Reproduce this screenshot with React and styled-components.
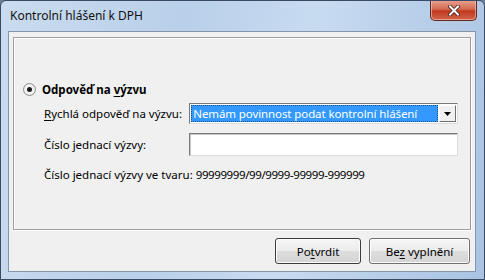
import React from "react";
import styled, { createGlobalStyle } from "styled-components";

const GlobalStyle = createGlobalStyle`
  html, body {
    margin: 0;
    padding: 0;
    background: #6b7f99;
  }
  * {
    box-sizing: border-box;
  }
`;

const Window = styled.div`
  width: 485px;
  height: 280px;
  display: flex;
  flex-direction: column;
  border: 1px solid #3a4a60;
  border-radius: 6px 6px 0 0;
  background: linear-gradient(100deg, #c9dcef 0%, #b9d0ea 35%, #c7dbf0 60%, #a9c3e2 100%);
  font-family: "Noto Sans", "Open Sans", sans-serif;
  font-size: 11.5px;
  color: #000;
  overflow: hidden;
`;

const TitleBar = styled.div`
  height: 30px;
  display: flex;
  justify-content: space-between;
  align-items: flex-start;
  padding: 0 7px 0 9px;
`;

const Title = styled.span`
  font-size: 12px;
  line-height: 30px;
  color: #111;
`;

const CloseButton = styled.div`
  width: 47px;
  height: 21px;
  margin-top: -1px;
  display: flex;
  align-items: center;
  justify-content: center;
  border: 1px solid #5c2a22;
  border-top: none;
  border-radius: 0 0 5px 5px;
  background: linear-gradient(#e8a493 0%, #d46a52 45%, #c1391f 55%, #d2644a 100%);
  box-shadow: inset 0 0 0 1px rgba(255, 210, 200, 0.55);
`;

const Client = styled.div`
  flex: 1;
  margin: 0 8px 8px 7px;
  display: flex;
  flex-direction: column;
  border: 1px solid #8595aa;
  background: #f0f0f0;
  padding: 5px 4px 7px 4px;
`;

const Panel = styled.div`
  height: 193px;
  border: 1px solid #a0a0a0;
  border-right-color: #9a9a9a;
  background: #f0f0f0;
  box-shadow: inset 1px 1px 0 #ffffff, 1px 1px 0 #ffffff;
  padding: 42px 12px 0 9px;
  display: flex;
  flex-direction: column;
`;

const RadioRow = styled.div`
  display: flex;
  align-items: center;
  height: 18px;
  gap: 6px;
`;

const Radio = styled.span`
  width: 13px;
  height: 13px;
  border-radius: 50%;
  border: 1px solid #8e8f8f;
  background: radial-gradient(circle, #ffffff 0%, #f0f0f0 60%, #dcdcdc 100%);
  display: flex;
  align-items: center;
  justify-content: center;

  &::after {
    content: "";
    width: 5px;
    height: 5px;
    border-radius: 50%;
    background: #1b1b1b;
  }
`;

const Heading = styled.span`
  font-weight: bold;
`;

const Access = styled.span`
  text-decoration: underline;
  text-underline-offset: 2px;
`;

const Fields = styled.div`
  padding-left: 21px;
  display: flex;
  flex-direction: column;
`;

const FieldRow = styled.div`
  display: flex;
  align-items: center;
  height: ${(p) => p.$h}px;
  margin-top: ${(p) => p.$top}px;
`;

const Label = styled.span`
  width: 146px;
  white-space: nowrap;
`;

const Select = styled.div`
  width: 270px;
  height: 21px;
  border: 1px solid #7a7a7a;
  border-right-color: #dcdcdc;
  border-bottom-color: #dcdcdc;
  background: #fff;
  display: flex;
  align-items: stretch;
  padding: 1px;
`;

const SelectValue = styled.div`
  flex: 1;
  background: #3399ff;
  color: #fff;
  padding-left: 2px;
  display: flex;
  align-items: center;
  outline: 1px dotted #1d4f87;
  outline-offset: -1px;
  white-space: nowrap;
  letter-spacing: -0.1px;
`;

const DropButton = styled.div`
  width: 17px;
  margin-left: 1px;
  background: #f0f0f0;
  border: 1px solid #fff;
  border-right-color: #6f6f6f;
  border-bottom-color: #6f6f6f;
  display: flex;
  align-items: center;
  justify-content: center;
`;

const Input = styled.div`
  width: 270px;
  height: 23px;
  border: 1px solid #7a7a7a;
  border-right-color: #dcdcdc;
  border-bottom-color: #dcdcdc;
  box-shadow: inset 1px 1px 0 #c8c8c8;
  background: #fff;
`;

const Hint = styled.div`
  height: 18px;
  margin-top: 9px;
  display: flex;
  align-items: center;
  white-space: pre;
`;

const Digits = styled.span`
  letter-spacing: -0.4px;
`;

const ButtonRow = styled.div`
  display: flex;
  justify-content: flex-end;
  gap: 8px;
  margin-top: 8px;
  padding-right: 1px;
`;

const Button = styled.div`
  width: ${(p) => p.$w}px;
  height: 26px;
  display: flex;
  align-items: center;
  justify-content: center;
  border: 1px solid ${(p) => (p.$default ? "#3c3c3c" : "#707070")};
  border-radius: 3px;
  background: linear-gradient(#f6f6f6 0%, #ececec 48%, #dddddd 52%, #d4d4d4 100%);
  box-shadow: inset 0 0 0 1px #fcfcfc;
`;

const App = () => {
  return (
    <>
      <GlobalStyle />
      <Window>
        <TitleBar>
          <Title>Kontrolní hlášení k DPH</Title>
          <CloseButton>
            <svg width="12" height="11" viewBox="0 0 12 11">
              <path
                d="M2 1.5 L10 9.5 M10 1.5 L2 9.5"
                stroke="#3a1a14"
                strokeWidth="3.6"
                strokeLinecap="square"
              />
              <path
                d="M2 1.5 L10 9.5 M10 1.5 L2 9.5"
                stroke="#ffffff"
                strokeWidth="2"
                strokeLinecap="square"
              />
            </svg>
          </CloseButton>
        </TitleBar>
        <Client>
          <Panel>
            <RadioRow>
              <Radio />
              <Heading>
                Odpověď na <Access>v</Access>ýzvu
              </Heading>
            </RadioRow>
            <Fields>
              <FieldRow $h={21} $top={5}>
                <Label>
                  <Access>R</Access>ychlá odpověď na výzvu:
                </Label>
                <Select>
                  <SelectValue>Nemám povinnost podat kontrolní hlášení</SelectValue>
                  <DropButton>
                    <svg width="7" height="4" viewBox="0 0 7 4">
                      <path d="M0 0 H7 L3.5 4 Z" fill="#000" />
                    </svg>
                  </DropButton>
                </Select>
              </FieldRow>
              <FieldRow $h={23} $top={9}>
                <Label>Číslo jednací výzvy:</Label>
                <Input />
              </FieldRow>
              <Hint>
                {"Číslo jednací výzvy ve tvaru: "}
                <Digits>99999999/99/9999-99999-999999</Digits>
              </Hint>
            </Fields>
          </Panel>
          <ButtonRow>
            <Button $w={86} $default>
              <span>
                Po<Access>t</Access>vrdit
              </span>
            </Button>
            <Button $w={101}>
              <span>
                Be<Access>z</Access> vyplnění
              </span>
            </Button>
          </ButtonRow>
        </Client>
      </Window>
    </>
  );
};

export default App;
